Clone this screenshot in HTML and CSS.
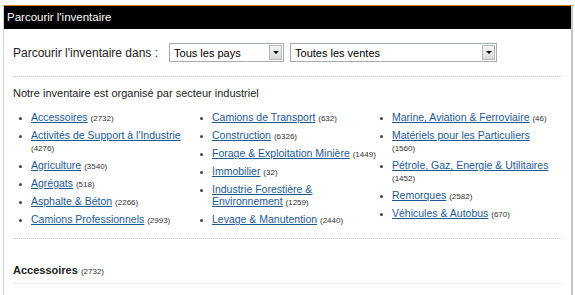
FILE: index.html
```html
<!DOCTYPE html>
<html lang="fr">
<head>
    <meta charset="UTF-8">
    <title>Parcourir l'inventaire</title>
    <link rel="stylesheet" href="styles.css">
</head>
<body>
    <div class="panel">
        <div class="panel-header">Parcourir l'inventaire</div>
        <div class="panel-body">
            <div class="browse-row">
                <span class="browse-label">Parcourir l'inventaire dans :</span>
                <div class="fake-select country">
                    <span class="fake-select-text">Tous les pays</span>
                    <span class="fake-select-btn"><span class="arrow"></span></span>
                </div>
                <div class="fake-select sale">
                    <span class="fake-select-text">Toutes les ventes</span>
                    <span class="fake-select-btn"><span class="arrow"></span></span>
                </div>
            </div>

            <div class="separator"></div>

            <h2 class="intro">Notre inventaire est organisé par secteur industriel</h2>

            <div class="sectors">
                <ul>
                    <li><a href="#">Accessoires</a> <span class="count">(2732)</span></li>
                    <li><a href="#">Activités de Support à l'Industrie</a> <span class="count">(4276)</span></li>
                    <li><a href="#">Agriculture</a> <span class="count">(3540)</span></li>
                    <li><a href="#">Agrégats</a> <span class="count">(518)</span></li>
                    <li><a href="#">Asphalte &amp; Béton</a> <span class="count">(2266)</span></li>
                    <li><a href="#">Camions Professionnels</a> <span class="count">(2993)</span></li>
                </ul>
                <ul>
                    <li><a href="#">Camions de Transport</a> <span class="count">(632)</span></li>
                    <li><a href="#">Construction</a> <span class="count">(6326)</span></li>
                    <li><a href="#">Forage &amp; Exploitation Minière</a> <span class="count">(1449)</span></li>
                    <li><a href="#">Immobilier</a> <span class="count">(32)</span></li>
                    <li><a href="#">Industrie Forestière &amp; Environnement</a> <span class="count">(1259)</span></li>
                    <li><a href="#">Levage &amp; Manutention</a> <span class="count">(2440)</span></li>
                </ul>
                <ul>
                    <li><a href="#">Marine, Aviation &amp; Ferroviaire</a> <span class="count">(46)</span></li>
                    <li><a href="#">Matériels pour les Particuliers</a> <span class="count">(1560)</span></li>
                    <li><a href="#">Pétrole, Gaz, Energie &amp; Utilitaires</a> <span class="count">(1452)</span></li>
                    <li><a href="#">Remorques</a> <span class="count">(2582)</span></li>
                    <li><a href="#">Véhicules &amp; Autobus</a> <span class="count">(670)</span></li>
                </ul>
            </div>

            <div class="separator"></div>

            <h3 class="section-title">Accessoires <span class="count">(2732)</span></h3>
            <div class="separator light"></div>
        </div>
    </div>
</body>
</html>
```

FILE: styles.css
```css
body {
    margin: 0;
    padding: 5px 2px 0 3px;
    font-family: "Liberation Sans", Arial, sans-serif;
    color: #333;
    background: #fff;
}
.panel {
    border-top: 1px solid #e07a10;
    border-left: 1px solid #d4d4d4;
    border-right: 2px solid #c8c8c8;
    height: 300px;
}
.panel-header {
    background: #000;
    color: #fff;
    font-size: 11.5px;
    height: 23px;
    line-height: 23px;
    padding-left: 3px;
}
.panel-body {
    padding: 14px 9px 0 9px;
}
.browse-row {
    display: flex;
    align-items: center;
    height: 19px;
}
.browse-label {
    font-size: 12px;
    color: #222;
    margin-right: 11px;
}
.fake-select {
    display: flex;
    align-items: center;
    height: 19px;
    box-sizing: border-box;
    border: 1px solid #a5acb2;
    background: #fff;
    font-size: 11px;
    color: #000;
}
.fake-select.country {
    width: 115px;
    margin-right: 6px;
}
.fake-select.sale {
    width: 207px;
}
.fake-select-text {
    flex: 1;
    padding-left: 4px;
}
.fake-select-btn {
    width: 13px;
    height: 15px;
    margin-right: 1px;
    border: 1px solid #b8b8b8;
    background: linear-gradient(#f4f4f4, #d8d8d8);
    display: flex;
    align-items: center;
    justify-content: center;
    box-sizing: border-box;
}
.arrow {
    width: 0;
    height: 0;
    border-left: 3px solid transparent;
    border-right: 3px solid transparent;
    border-top: 3px solid #000;
}
.separator {
    border-top: 1px dotted #c8c8c8;
    margin-top: 14px;
}
.separator.light {
    border-top-color: #e4e4e4;
    margin-top: 7px;
}
.intro {
    font-size: 11px;
    font-weight: normal;
    color: #222;
    margin: 10px 0 0 0;
}
.sectors {
    display: grid;
    grid-template-columns: 181px 180px 1fr;
    margin-top: 12px;
}
.sectors ul {
    margin: 0;
    padding: 0 0 0 18px;
    list-style: disc;
}
.sectors li {
    font-size: 10.5px;
    line-height: 12px;
    margin-bottom: 6px;
    margin-right: -8px;
}
.sectors ul:last-child li {
    margin-right: 0;
    width: 160px;
}
.sectors li::marker {
    color: #444;
    font-size: 9px;
}
.sectors a {
    color: #1d5a94;
    text-decoration: underline;
}
.count {
    font-size: 8px;
    line-height: 1;
    color: #333;
    font-weight: normal;
}
.sectors + .separator {
    margin-top: 7px;
}
.section-title {
    font-size: 11px;
    font-weight: bold;
    color: #222;
    margin: 25px 0 0 0;
}
```
